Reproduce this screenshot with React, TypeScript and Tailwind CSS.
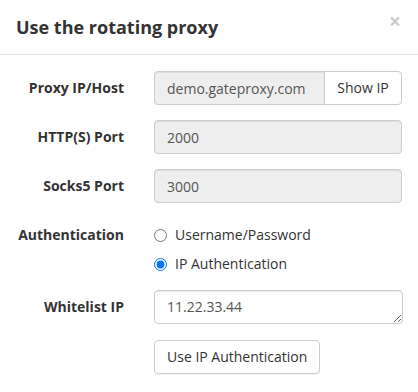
import { useState } from 'react'

const labelCls = 'w-[109px] shrink-0 text-right text-sm font-bold text-[#333] pt-[7px] leading-5'
const inputCls =
  'h-[34px] rounded border border-[#ccc] bg-[#eee] px-3 text-sm text-[#555] leading-5 shadow-[inset_0_1px_1px_rgba(0,0,0,0.075)] outline-none'

export default function App() {
  const [auth, setAuth] = useState<'user' | 'ip'>('ip')

  return (
    <div className="w-[418px] h-[392px] bg-white font-['Open_Sans',sans-serif] overflow-hidden">
      <div className="flex items-center justify-between h-[55px] px-4 border-b border-[#e5e5e5]">
        <h4 className="text-lg font-bold text-[#333] leading-6 m-0">Use the rotating proxy</h4>
        <button className="text-[21px] font-bold leading-none text-black opacity-20 -mt-[12px] mr-[1px]">×</button>
      </div>

      <div className="pt-[16px] px-[15px] pb-[15px]">
        <div className="flex gap-[30px] mb-[15px]">
          <label className={labelCls}>Proxy IP/Host</label>
          <div className="flex w-[248px]">
            <input
              readOnly
              value="demo.gateproxy.com"
              className={`${inputCls} w-[171px] rounded-r-none`}
            />
            <button className="h-[34px] w-[78px] -ml-px rounded-r border border-[#ccc] bg-white px-3 text-sm text-[#333]">
              Show IP
            </button>
          </div>
        </div>

        <div className="flex gap-[30px] mb-[15px]">
          <label className={labelCls}>HTTP(S) Port</label>
          <input readOnly value="2000" className={`${inputCls} w-[248px]`} />
        </div>

        <div className="flex gap-[30px] mb-[15px]">
          <label className={labelCls}>Socks5 Port</label>
          <input readOnly value="3000" className={`${inputCls} w-[248px]`} />
        </div>

        <div className="flex gap-[30px] mb-[16px]">
          <label className={labelCls}>Authentication</label>
          <div className="flex flex-col pt-[7px] gap-[9px]">
            <label className="flex items-center gap-[8px] text-sm text-[#333] leading-5">
              <input
                type="radio"
                name="auth"
                checked={auth === 'user'}
                onChange={() => setAuth('user')}
                className="w-[13px] h-[13px] m-0"
              />
              Username/Password
            </label>
            <label className="flex items-center gap-[8px] text-sm text-[#333] leading-5">
              <input
                type="radio"
                name="auth"
                checked={auth === 'ip'}
                onChange={() => setAuth('ip')}
                className="w-[13px] h-[13px] m-0"
              />
              IP Authentication
            </label>
          </div>
        </div>

        <div className="flex gap-[30px] mb-[16px]">
          <label className={labelCls}>Whitelist IP</label>
          <textarea
            defaultValue="11.22.33.44"
            rows={1}
            className="h-[34px] w-[252px] rounded border border-[#ccc] bg-white px-3 py-[6px] text-sm text-[#555] leading-5 shadow-[inset_0_1px_1px_rgba(0,0,0,0.075)] outline-none"
          />
        </div>

        <div className="pl-[139px]">
          <button className="h-[34px] rounded border border-[#ccc] bg-white px-3 text-sm text-[#333] shadow-[0_1px_1px_rgba(0,0,0,0.05)]">
            Use IP Authentication
          </button>
        </div>
      </div>
    </div>
  )
}
